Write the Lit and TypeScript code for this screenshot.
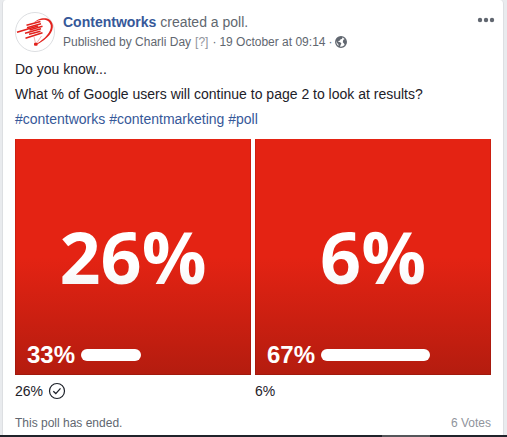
import { LitElement, html, css } from "lit";
import { customElement, property } from "lit/decorators.js";

@customElement("poll-option")
class PollOption extends LitElement {
  @property() label = "";
  @property({ type: Number }) share = 0;
  @property({ type: Boolean }) chosen = false;

  static styles = css`
    :host { display: block; flex: 1; min-width: 0; }
    .tile {
      aspect-ratio: 1;
      box-sizing: border-box;
      display: grid;
      grid-template-rows: 1fr auto;
      background: linear-gradient(#e42313 50%, #b41c0f);
      border: 1px solid rgba(0, 0, 0, 0.1);
      border-top-color: transparent;
      background-origin: border-box;
      color: #fff;
    }
    .figure {
      font: 700 72px/100px "Open Sans", sans-serif;
      text-align: center;
      align-self: center;
      padding-top: 32px;
      background: linear-gradient(#fff 70%, #ececec);
      background-clip: text;
      -webkit-background-clip: text;
      color: transparent;
    }
    .result {
      display: flex;
      align-items: center;
      gap: 6px;
      padding: 0 12px 4px 11px;
      font-size: 24px;
      line-height: 30px;
      font-weight: 700;
    }
    .track { flex: 1; }
    .bar { height: 12px; border-radius: 6px; background: #fff; }
    .caption {
      display: flex;
      align-items: center;
      gap: 5px;
      height: 32px;
      font-size: 14px;
      color: #1d2129;
    }
    svg { display: block; }
  `;

  render() {
    return html`
      <div class="tile">
        <div class="figure">${this.label}</div>
        <div class="result">
          <span>${this.share}%</span>
          <div class="track">
            <div class="bar" style="width: calc(12px + (100% - 12px) * ${this.share / 100})"></div>
          </div>
        </div>
      </div>
      <div class="caption">
        <span>${this.label}</span>
        ${this.chosen
          ? html`<svg width="18" height="18" viewBox="0 0 18 18" fill="none" stroke="#1d2129" role="img" aria-label="Your vote">
              <circle cx="9" cy="9" r="7.5" stroke-width="1.2" />
              <path d="M5.3 9.3 7.8 11.6 12.5 6.4" stroke-width="1.3" />
            </svg>`
          : ""}
      </div>
    `;
  }
}

@customElement("app-root")
class AppRoot extends LitElement {
  static styles = css`
    :host {
      display: flex;
      flex-direction: column;
      min-height: 100vh;
      background: #e9ebee;
      font-family: "Liberation Sans", Arial, sans-serif;
      color: #1d2129;
    }
    a { color: #365899; text-decoration: none; }
    .card {
      flex: 1;
      margin: 0 3px 0 2px;
      padding: 12px 12px 0;
      background: #fff;
      border: solid #dddfe2;
      border-width: 0 1px;
      border-radius: 4px 4px 0 0;
    }
    .head { display: flex; gap: 8px; height: 40px; }
    .avatar { width: 40px; height: 40px; display: block; }
    .who { flex: 1; }
    .title { font-size: 14px; line-height: 20px; color: #616770; }
    .title a { font-weight: 700; }
    .meta {
      display: flex;
      align-items: center;
      gap: 3px;
      font-size: 12px;
      line-height: 20px;
      color: #616770;
    }
    .hint { color: #90949c; padding: 0 1px; }
    .menu {
      align-self: flex-start;
      margin-right: -4px;
      padding: 5px 0;
      border: 0;
      background: none;
      display: flex;
    }
    .message { padding-top: 5px; font-size: 14px; line-height: 25px; }
    .message p { margin: 0; }
    .options { display: flex; gap: 4px; padding-top: 7px; }
    .foot {
      display: flex;
      justify-content: space-between;
      padding-top: 8px;
      font-size: 12px;
      line-height: 16px;
      color: #616770;
    }
    .votes { color: #90949c; }
    .taskbar { height: 2px; background: #20232a; display: flex; justify-content: flex-end; }
    .active { width: 48px; margin-right: 77px; background: #55565a; }
  `;

  render() {
    return html`
      <article class="card">
        <header class="head">
          <svg class="avatar" viewBox="0 0 40 40" fill="none" role="img" aria-label="Contentworks logo">
            <circle cx="20" cy="20" r="19.5" fill="#fff" stroke="#dcdee1" />
            <path d="M19 10.500C23 5.500 36 3 37.800 13 38.500 20 33 26.500 22 32.500L21.800 31.800C30 26.500 36.500 20 35.800 13.500 34.500 6 25 6.500 19 10.500Z" fill="#e2211c" />
            <g stroke="#e2211c">
              <path d="M2 20.200 23 14" stroke-width="1.700" />
              <path d="M11.500 13.200 25.500 9.500M12 15.800 26 11.800M14.500 18 27.500 14.200M10 21.200 26 16.800M14 22.300 25.500 19.300M10.500 26.200 27.500 20.800" stroke-width="1.500" />
              <path d="M19 24.500 20.500 31.500M26.500 24 21 32" stroke-width="0.500" opacity="0.700" />
            </g>
            <rect x="19" y="30.800" width="3.600" height="3" rx="1" fill="#e2211c" />
          </svg>
          <div class="who">
            <div class="title"><a href="#contentworks">Contentworks</a> created a poll.</div>
            <div class="meta">
              <span>Published by Charli Day</span>
              <span class="hint">[?]</span>
              <span>·</span>
              <span>19 October at 09:14</span>
              <span>·</span>
              <svg width="12" height="12" viewBox="0 0 12 12" role="img" aria-label="Public">
                <circle cx="6" cy="6" r="5.300" fill="#fff" stroke="#616770" stroke-width="1.300" />
                <path d="M.8 4C2 1.500 4 .6 7 .8L7.600 1.800 6.800 3 5.500 3.200 5 4.600 3.500 5 3.200 5.800 5.200 6.300 6.400 7.600 5.600 9 4.800 11.200 3.600 10.800 3.400 8.500 1.800 6.500ZM8.200 4 9.500 3 11.300 5 11.200 7.500 9.800 9 9 7.400 7.800 6.200Z" fill="#616770" />
              </svg>
            </div>
          </div>
          <button class="menu" aria-label="Post options">
            <svg width="18" height="6" viewBox="0 0 18 6" fill="#616770">
              <circle cx="3" cy="3" r="2.200" /><circle cx="9" cy="3" r="2.200" /><circle cx="15" cy="3" r="2.200" />
            </svg>
          </button>
        </header>
        <div class="message">
          <p>Do you know...</p>
          <p>What % of Google users will continue to page 2 to look at results?</p>
          <p>
            <a href="#contentworks">#contentworks</a>
            <a href="#contentmarketing">#contentmarketing</a>
            <a href="#poll">#poll</a>
          </p>
        </div>
        <div class="options">
          <poll-option label="26%" .share=${33} chosen></poll-option>
          <poll-option label="6%" .share=${67}></poll-option>
        </div>
        <footer class="foot">
          <span>This poll has ended.</span>
          <span class="votes">6 Votes</span>
        </footer>
      </article>
      <div class="taskbar"><div class="active"></div></div>
    `;
  }
}
